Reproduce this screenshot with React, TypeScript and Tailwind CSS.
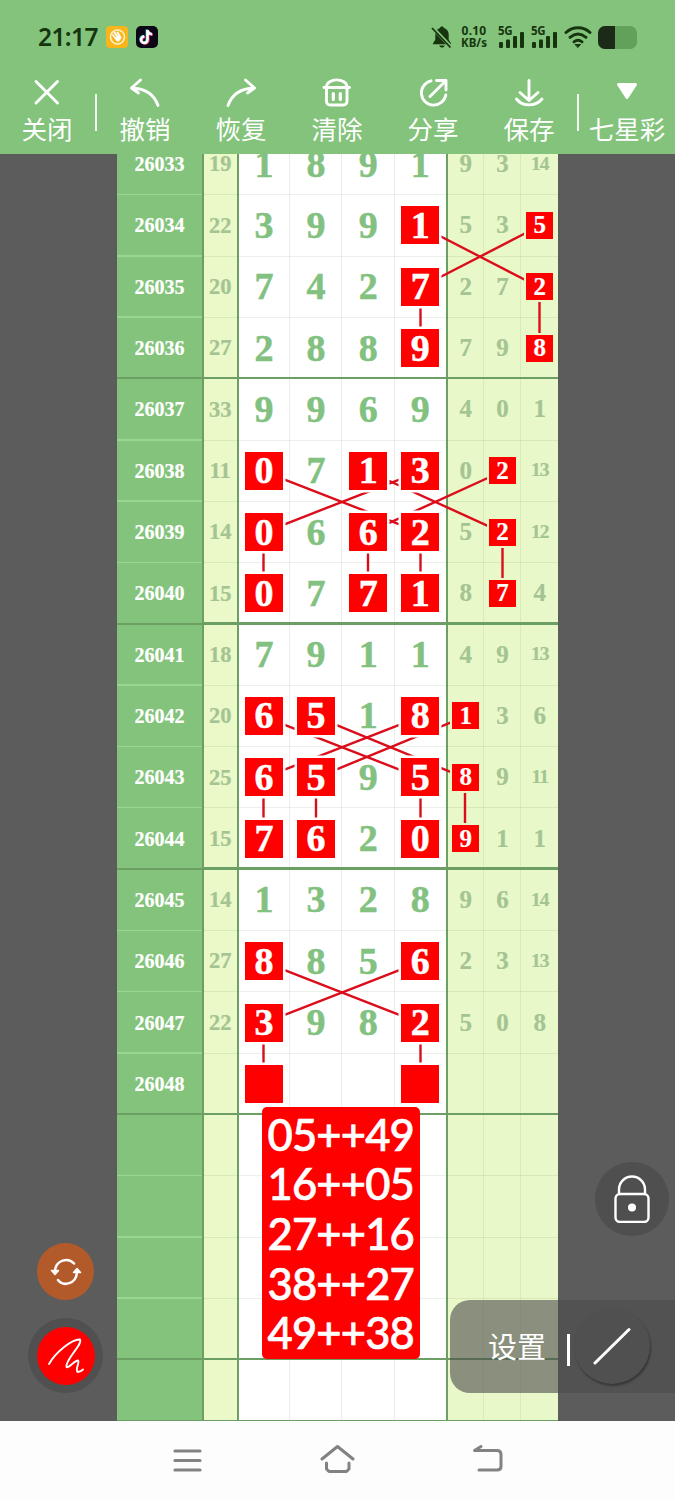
import React from "react";
import clsx from "clsx";

interface DrawRow {
  issue: string;
  sum: string;
  digits: string[];
  marked?: number[];
}

// digits: four main numbers followed by three trailing ones
const rows: DrawRow[] = [
  { issue: "26033", sum: "19", digits: ["1", "8", "9", "1", "9", "3", "14"] },
  { issue: "26034", sum: "22", digits: ["3", "9", "9", "1", "5", "3", "5"], marked: [3, 6] },
  { issue: "26035", sum: "20", digits: ["7", "4", "2", "7", "2", "7", "2"], marked: [3, 6] },
  { issue: "26036", sum: "27", digits: ["2", "8", "8", "9", "7", "9", "8"], marked: [3, 6] },
  { issue: "26037", sum: "33", digits: ["9", "9", "6", "9", "4", "0", "1"] },
  { issue: "26038", sum: "11", digits: ["0", "7", "1", "3", "0", "2", "13"], marked: [0, 2, 3, 5] },
  { issue: "26039", sum: "14", digits: ["0", "6", "6", "2", "5", "2", "12"], marked: [0, 2, 3, 5] },
  { issue: "26040", sum: "15", digits: ["0", "7", "7", "1", "8", "7", "4"], marked: [0, 2, 3, 5] },
  { issue: "26041", sum: "18", digits: ["7", "9", "1", "1", "4", "9", "13"] },
  { issue: "26042", sum: "20", digits: ["6", "5", "1", "8", "1", "3", "6"], marked: [0, 1, 3, 4] },
  { issue: "26043", sum: "25", digits: ["6", "5", "9", "5", "8", "9", "11"], marked: [0, 1, 3, 4] },
  { issue: "26044", sum: "15", digits: ["7", "6", "2", "0", "9", "1", "1"], marked: [0, 1, 3, 4] },
  { issue: "26045", sum: "14", digits: ["1", "3", "2", "8", "9", "6", "14"] },
  { issue: "26046", sum: "27", digits: ["8", "8", "5", "6", "2", "3", "13"], marked: [0, 3] },
  { issue: "26047", sum: "22", digits: ["3", "9", "8", "2", "5", "0", "8"], marked: [0, 3] },
  { issue: "26048", sum: "", digits: ["", "", "", "", "", "", ""], marked: [0, 3] },
  { issue: "", sum: "", digits: ["", "", "", "", "", "", ""] },
  { issue: "", sum: "", digits: ["", "", "", "", "", "", ""] },
  { issue: "", sum: "", digits: ["", "", "", "", "", "", ""] },
  { issue: "", sum: "", digits: ["", "", "", "", "", "", ""] },
  { issue: "", sum: "", digits: ["", "", "", "", "", "", ""] },
];

const ROW_HEIGHT = 61.32;
const COL_X = [146.5, 199, 251, 303.5, 348, 385.5, 422.5];

// [row, col, row, col]
const links: number[][] = [
  [1, 3, 2, 6],
  [1, 6, 2, 3],
  [2, 3, 3, 3],
  [2, 6, 3, 6],
  [5, 0, 6, 3],
  [5, 3, 6, 0],
  [5, 2, 6, 5],
  [5, 5, 6, 2],
  [6, 0, 7, 0],
  [6, 2, 7, 2],
  [6, 3, 7, 3],
  [6, 5, 7, 5],
  [9, 0, 10, 3],
  [9, 3, 10, 0],
  [9, 1, 10, 4],
  [9, 4, 10, 1],
  [10, 0, 11, 0],
  [10, 1, 11, 1],
  [10, 3, 11, 3],
  [10, 4, 11, 4],
  [13, 0, 14, 3],
  [13, 3, 14, 0],
  [14, 0, 15, 0],
  [14, 3, 15, 3],
];

const guesses = ["05++49", "16++05", "27++16", "38++27", "49++38"];

function Signal() {
  return (
    <div className="flex flex-col items-start w-[27px] h-[24px]">
      <span className="text-[11.5px] leading-[11px] font-bold tracking-[-0.3px]">5G</span>
      <svg viewBox="0 0 27 24" className="w-[27px] h-[24px] -mt-[11px] shrink-0" fill="currentColor">
        <rect x="1" y="17" width="4" height="6" rx="1" />
        <rect x="8" y="14.5" width="4" height="8.5" rx="1" />
        <rect x="15" y="11" width="4" height="12" rx="1" />
        <rect x="22" y="7" width="4" height="16" rx="1" />
      </svg>
    </div>
  );
}

function StatusBar() {
  return (
    <div className="flex items-center h-[74px] pl-[38px] pr-[38px] text-[#16350f] font-['Noto_Sans']">
      <span className="text-[24.5px] font-semibold tracking-[-0.6px] w-[68px]">21:17</span>
      <svg viewBox="0 0 22 22" className="w-[22px] h-[22px]">
        <rect width="22" height="22" rx="4" fill="#f9b51c" />
        <circle cx="11.5" cy="11" r="7" fill="none" stroke="#fff2c4" strokeWidth="1.6" />
        <path d="M7 9l4 5M8.500 6.500l4 5.500M11.500 6.500l3 5" stroke="#fff" strokeWidth="1.8" strokeLinecap="round" />
        <path d="M9.500 11.500l5-2 .8 3-2.800 3.200-2.500-1z" fill="#fff" />
      </svg>
      <svg viewBox="0 0 22 22" className="w-[22px] h-[22px] ml-[8px]">
        <rect width="22" height="22" rx="5" fill="#0c0716" />
        <g fill="none" strokeWidth="2.500">
          <path d="M11.500 4v9.800a3.200 3.200 0 1 1-3.200-3.200M11.500 4.500c.5 2.500 2 3.600 4.600 3.800" stroke="#42dfe0" transform="translate(-.6 -.4)" />
          <path d="M11.500 4v9.800a3.200 3.200 0 1 1-3.200-3.200M11.500 4.500c.5 2.500 2 3.600 4.600 3.800" stroke="#f0346a" transform="translate(.8 .5)" />
          <path d="M11.500 4v9.800a3.200 3.200 0 1 1-3.200-3.200M11.500 4.500c.5 2.500 2 3.600 4.600 3.800" stroke="#fff" />
        </g>
      </svg>
      <div className="flex-1" />
      <svg viewBox="0 0 22 24" className="w-[22px] h-[24px]">
        <path d="M11 1.500c1.200 0 1.900.7 2 1.600 3 .9 4.700 3.400 4.700 6.600v5l2.300 3.600v1H2v-1l2.300-3.600v-5C4.300 6.500 6 4 9 3.100c.1-.9.800-1.600 2-1.600zM8.300 20.500h5.400c-.4 1.400-1.400 2.100-2.700 2.100s-2.300-.7-2.700-2.100z" fill="currentColor" />
        <path d="M1.500 2.500l18 19" stroke="#83c37b" strokeWidth="3.500" />
        <path d="M1 3l18.500 19.500" stroke="currentColor" strokeWidth="1.800" />
      </svg>
      <div className="ml-[6px] w-[30px] flex flex-col items-center text-[11.500px] leading-[12px] font-bold">
        <span className="text-[12px] tracking-[0.2px]">0.10</span>
        <span>KB/s</span>
      </div>
      <div className="ml-[9px] flex gap-[6px]">
        <Signal />
        <Signal />
      </div>
      <svg viewBox="0 0 28 24" className="w-[28px] h-[24px] ml-[6px]" fill="none" stroke="currentColor" strokeWidth="2.900" strokeLinecap="round">
        <path d="M2 7.500c7-6.300 17-6.300 24 0M6 12.300c5-4 11-4 16 0M10 16.800c2.500-1.900 5.500-1.900 8 0" />
        <path d="M11.500 19.500h5L14 22.300z" fill="currentColor" strokeWidth="1" />
      </svg>
      <div className="ml-[6px] w-[39px] h-[23px] rounded-[7px] bg-[#62a15b] overflow-hidden shrink-0">
        <div className="w-[17px] h-full bg-[#1b2b18]" />
      </div>
    </div>
  );
}

interface ToolProps {
  label: string;
  children: React.ReactNode;
}

function Tool({ label, children }: ToolProps) {
  return (
    <button className="flex flex-col items-center w-[96px] text-white">
      <svg
        viewBox="0 0 32 32"
        className="w-8 h-8"
        fill="none"
        stroke="currentColor"
        strokeWidth="2.900"
        strokeLinecap="round"
        strokeLinejoin="round"
      >
        {children}
      </svg>
      <span className="text-[25.5px] leading-[36px] mt-[2px] whitespace-nowrap">{label}</span>
    </button>
  );
}

function Toolbar() {
  return (
    <div className="flex h-20 w-[675px] pt-[2px] font-['Noto_Sans_CJK_SC',sans-serif]">
      <div className="-ml-px">
        <Tool label="关闭">
          <path d="M5 5.500l21.500 21.500M26.500 5.500L5 27" />
        </Tool>
      </div>
      <div className="w-[2px] h-[37px] mt-[18px] bg-white/90" />
      <Tool label="撤销">
        <path d="M11.500 4L2.500 12l7 5M3 12c12 .5 22 6 26 17.500" />
      </Tool>
      <Tool label="恢复">
        <path d="M20.500 4l9 8-7 5M29 12C17 12.500 7 18 3 29.500" />
      </Tool>
      <Tool label="清除">
        <path d="M3 11.500h25.500M5.500 11C5.500 1.500 26 1.500 26 11M5.500 12v13c0 3 1.500 4 4 4H22c2.500 0 4-1 4-4V12" />
        <path d="M12.300 17.500v6M19.300 17.500v6" strokeWidth="3.200" />
      </Tool>
      <Tool label="分享">
        <path d="M14 4.800A12.300 12.300 0 1 0 28.800 19M13 20.500L28.500 5M19.500 4.500h9.500V14" />
      </Tool>
      <Tool label="保存">
        <path d="M16 4.500v20M7 16.500l9 8 9-8M3.500 23c6 7.800 19 7.800 25.500 0" />
      </Tool>
      <div className="w-[2px] h-[37px] mt-[18px] bg-white/90" />
      <Tool label="七星彩">
        <path d="M7.500 8.500h17L16 21.500z" fill="currentColor" strokeWidth="3" />
      </Tool>
    </div>
  );
}

function Cell({ value, index, marked }: { value: string; index: number; marked: boolean }) {
  const main = index < 4;
  return (
    <div
      className={clsx(
        "flex items-center justify-center pb-px",
        main ? "bg-white [-webkit-text-stroke:0.5px]" : "bg-[#e8f8c8] [-webkit-text-stroke:0.2px]",
        index === 3 && "border-r-2 border-r-[#6b9f64]",
        index < 3 && "border-r border-r-[#ececec]",
        (index === 4 || index === 5) && "border-r border-r-[#dbeabc]"
      )}
    >
      {marked ? (
        <span
          className={clsx(
            "relative z-20 flex items-center justify-center bg-[#fe0000] text-white pb-px",
            main
              ? "w-[38px] h-[38px] text-[38px] shadow-[0_0_0_2.5px_#ffffff]"
              : "w-[27px] h-[27px] text-[25px] shadow-[0_0_0_2px_#e8f8c8]"
          )}
        >
          {value}
        </span>
      ) : (
        <span
          className={clsx(
            "pb-px",
            main ? "text-[38px] text-[#82c180]" : "text-[#a4c493]",
            !main && (value.length > 1 ? "text-[19.5px] tracking-[-1px]" : "text-[25px]")
          )}
        >
          {value}
        </span>
      )}
    </div>
  );
}

function TrendTable() {
  return (
    <div className="relative w-[441px] ml-[117px] -mt-[20px] font-['Liberation_Serif',serif] font-bold leading-none">
      {rows.map((row, i) => {
        const groupEnd = i % 4 === 3;
        const last = i === rows.length - 1;
        return (
          <div
            key={i}
            className="relative grid grid-cols-[87px_34.5px_51.8px_52.2px_52.3px_53px_36.7px_37px_36.500px] h-[61.32px]"
          >
            <div className="flex items-center justify-center pb-px bg-[#83c37b] border-r-2 border-r-[#6b9f64] text-white text-[20px] [-webkit-text-stroke:0.2px]">
              {row.issue}
            </div>
            <div className="flex items-center justify-center bg-[#ebf8c8] border-r-2 border-r-[#6b9f64] text-[#a4c493] text-[22.5px] [-webkit-text-stroke:0.2px]">
              {row.sum}
            </div>
            {row.digits.map((digit, j) => (
              <Cell key={j} value={digit} index={j} marked={!!row.marked?.includes(j)} />
            ))}
            {/* separator under the row */}
            <div className="absolute inset-x-0 bottom-0 flex items-end">
              <div
                className={clsx(
                  "w-[85px]",
                  groupEnd || last ? "h-[2px] bg-[#6b9f64]" : "h-[1.500px] bg-[#9ad592]"
                )}
              />
              <div
                className={clsx(
                  "flex-1",
                  groupEnd ? "h-[2.500px] bg-[#6b9f64]" : last ? "h-[2px] bg-[#6b9f64]" : "h-px bg-[#5a8040]/12"
                )}
              />
            </div>
          </div>
        );
      })}
      <svg className="absolute inset-0 z-10 w-full h-full" stroke="#dc0d1a" strokeWidth="2.400">
        {links.map(([r1, c1, r2, c2]) => (
          <line
            key={`${r1}-${c1}-${r2}-${c2}`}
            x1={COL_X[c1]}
            y1={(r1 + 0.5) * ROW_HEIGHT}
            x2={COL_X[c2]}
            y2={(r2 + 0.5) * ROW_HEIGHT}
          />
        ))}
      </svg>
    </div>
  );
}

function GuessNote() {
  return (
    <div className="absolute z-30 left-[261.5px] top-[953px] w-[158.5px] h-[252px] pt-[2.500px] rounded-[5px] bg-[#fe0000] text-white text-center font-['Lato',sans-serif] font-medium text-[43.5px] leading-[49.7px] tracking-[-0.8px] [-webkit-text-stroke:0.7px]">
      {guesses.map((guess) => (
        <p key={guess} className="-mx-4 whitespace-nowrap">
          {guess}
        </p>
      ))}
    </div>
  );
}

function FloatingButtons() {
  return (
    <>
      <button className="absolute z-30 left-[37px] top-[1089px] w-[57px] h-[57px] rounded-full bg-[#b25a2a] flex items-center justify-center">
        <svg viewBox="0 0 32 32" className="w-8 h-8" fill="none" stroke="#fff" strokeWidth="2.500" strokeLinecap="round">
          <path d="M5 15C6 4 18 1 24 7.500M27 16.500C26 28 13.500 31 8 24" />
          <path d="M1.500 14.500h7L5 18.500zM30.500 16.500h-7l3.500-4z" fill="#fff" strokeWidth="1.500" strokeLinejoin="round" />
        </svg>
      </button>
      <button className="absolute z-30 left-[28px] top-[1164px] w-[75px] h-[75px] rounded-full bg-[#505050] flex items-center justify-center">
        <span className="w-[58px] h-[58px] rounded-full bg-[#fe0000] flex items-center justify-center">
          <svg viewBox="0 0 40 40" className="w-10 h-10" fill="none" stroke="#fff" strokeWidth="1.900" strokeLinecap="round" strokeLinejoin="round">
            <path d="M3 28C10 16 26 3 34 3.500c3 5-15 20-13.500 27.500C22 33 29 24 32 24.500c2 2-3 8-.5 11.500 2 0 4-1 5.500-2.500" />
          </svg>
        </span>
      </button>
      <button className="absolute z-30 left-[594.5px] top-[1007.5px] w-[74px] h-[74px] rounded-full bg-[#4f4f4f] flex items-center justify-center">
        <svg viewBox="0 0 36 48" className="w-[36px] h-[48px]" fill="none" stroke="#fff" strokeWidth="2.400">
          <rect x="1.500" y="19" width="33" height="28" rx="4.500" />
          <path d="M5 19v-4.500a13 13 0 0 1 26 0V19" />
          <circle cx="18" cy="32.500" r="4" fill="#fff" stroke="none" />
        </svg>
      </button>
      <div className="absolute z-30 right-0 top-[1145.5px] w-[225px] h-[93.500px] rounded-l-[20px] bg-[#4b4b4b]/60 flex items-center text-white font-['Noto_Sans_CJK_SC',sans-serif]">
        <span className="ml-[38px] -mt-[2px] w-[59px] text-[29px] leading-none">设置</span>
        <span className="ml-[20px] mt-[8px] w-[2.500px] h-[32px] bg-white" />
        <span className="ml-[4px] w-[76px] h-[76px] rounded-full bg-[#505050] shadow-[1px_2px_2px_0_#363636] flex items-center justify-center">
          <svg viewBox="0 0 38 38" className="w-[38px] h-[38px]" stroke="#fff" strokeWidth="3" strokeLinecap="round">
            <path d="M2 36L36 2.500" />
          </svg>
        </span>
      </div>
    </>
  );
}

function NavBar() {
  return (
    <div className="h-[79px] bg-[#fdfdfd] flex items-center justify-center gap-[114px] text-[#828282]">
      <svg viewBox="0 0 36 36" className="w-9 h-9" stroke="currentColor" strokeWidth="3.200" strokeLinecap="round">
        <path d="M5 8h25M5 17.500h25M5 27h25" />
      </svg>
      <svg viewBox="0 0 36 36" className="w-9 h-9" fill="none" stroke="currentColor" strokeWidth="3" strokeLinecap="round" strokeLinejoin="round">
        <path d="M2 16L17.500 3.500 33 16M6.500 20v6l2.500 2.500h17.500l2.500-2.500v-6" />
      </svg>
      <svg viewBox="0 0 36 36" className="w-9 h-9" fill="none" stroke="currentColor" strokeWidth="3" strokeLinecap="round" strokeLinejoin="round">
        <path d="M11 3.500L4.500 7.500h22.500q4 0 4 4v12q0 3.500-4 3.500H9" />
      </svg>
    </div>
  );
}

export default function App() {
  return (
    <div className="w-[675px] h-[1500px] overflow-hidden flex flex-col bg-[#5c5c5c]">
      <header className="h-[154px] shrink-0 bg-[#83c37b]">
        <StatusBar />
        <Toolbar />
      </header>
      <main className="relative h-[1267px] shrink-0 overflow-hidden">
        <TrendTable />
        <GuessNote />
        <FloatingButtons />
      </main>
      <NavBar />
    </div>
  );
}
